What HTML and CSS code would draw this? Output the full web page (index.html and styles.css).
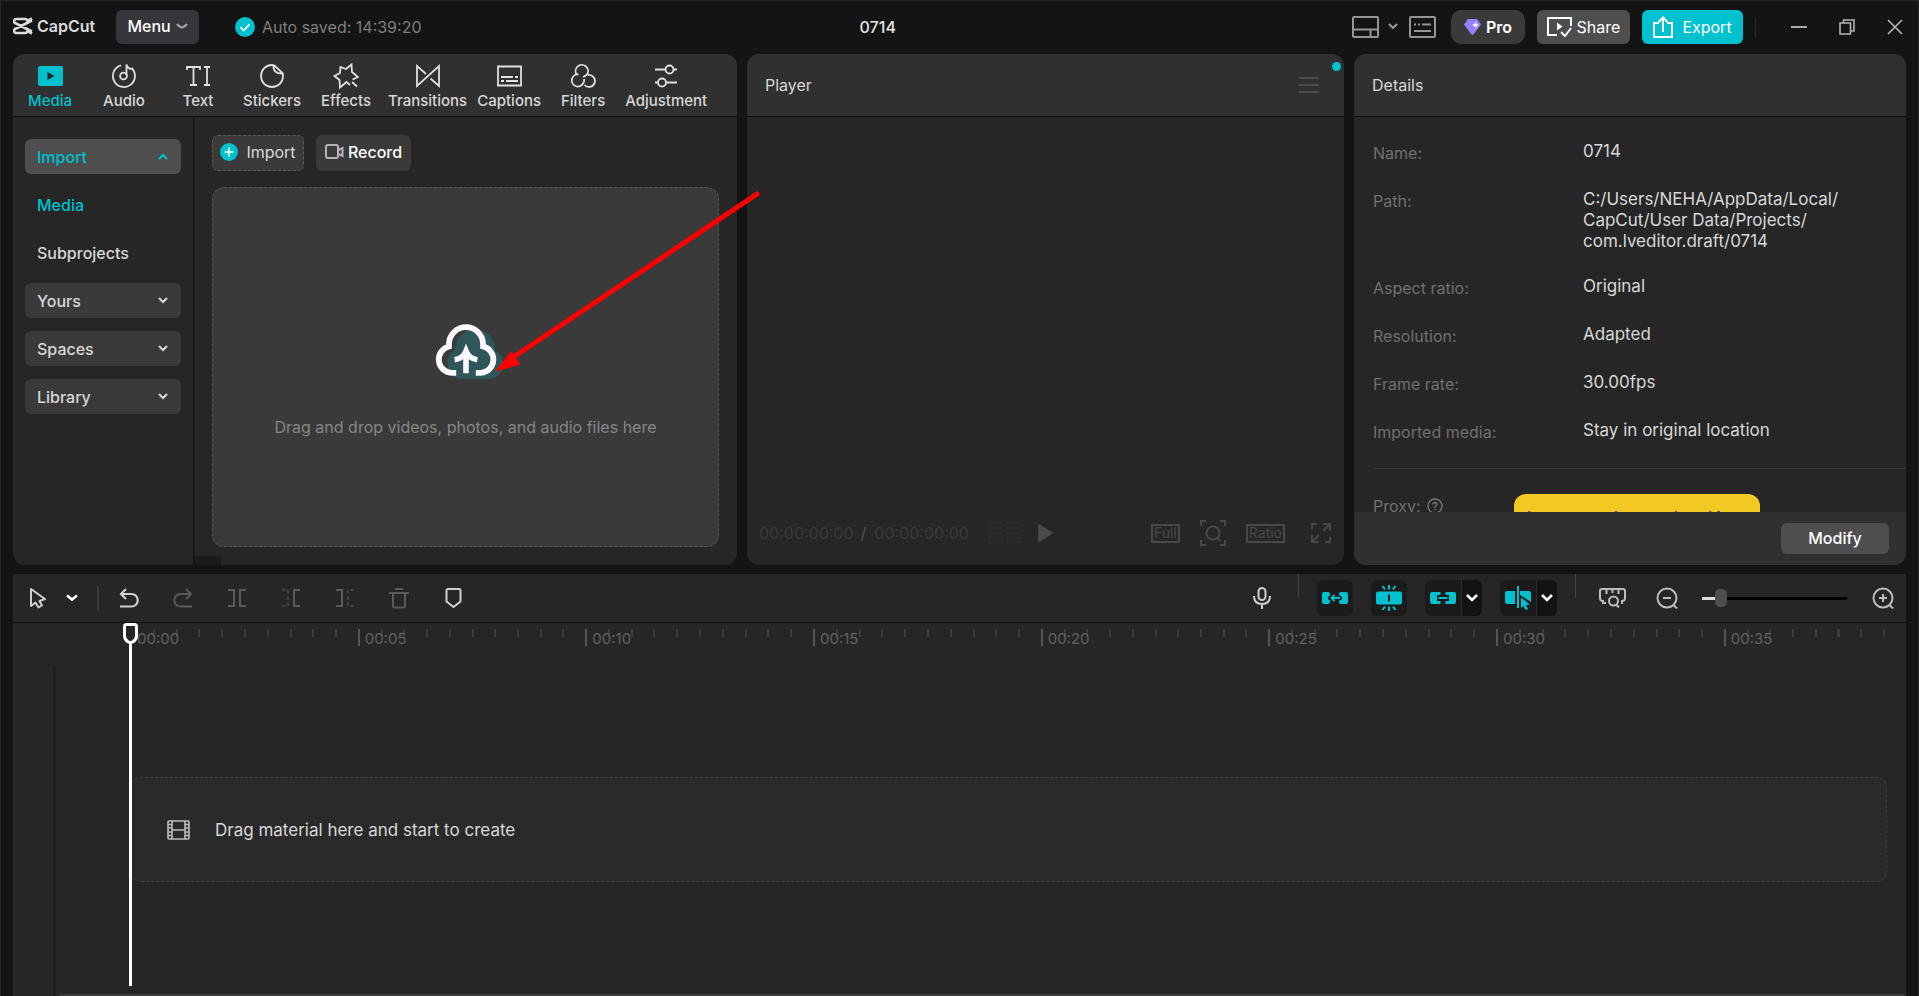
FILE: index.html
```html
<!DOCTYPE html>
<html lang="en">
<head>
    <meta charset="UTF-8">
    <meta name="viewport" content="width=device-width, initial-scale=1.0">
    <title>CapCut - 0714</title>
    <link rel="stylesheet" href="styles.css">
</head>
<body>
    <!-- Title bar -->
    <header class="titlebar">
        <div class="logo">
            <svg width="20" height="18" viewBox="0 0 20 18" fill="none" stroke="#dcdcdc" stroke-width="2.6"><path d="M1 6V4.5Q1 2 3.5 2H12Q14 2 14.5 4L19 1.5M1 12v1.5Q1 16 3.5 16H12Q14 16 14.5 14L19 16.5M1 5.5L19 14.5M1 12.500L19 3.500"/></svg>
            <span>CapCut</span>
        </div>
        <button class="menu-btn">Menu
            <svg width="12" height="8" viewBox="0 0 12 8" fill="none" stroke="#a0a0a4" stroke-width="2.4"><path d="M1 2Q4.500 5.500 6 5.500T11 2"/></svg>
        </button>
        <div class="saved">
            <svg width="20" height="20" viewBox="0 0 20 20"><circle cx="10" cy="10" r="10" fill="#00c1cd"/><path d="M5.500 10.200l3.200 3.200 5.800-6" fill="none" stroke="#fff" stroke-width="1.800"/></svg>
            <span>Auto saved: 14:39:20</span>
        </div>
        <h1 class="project">0714</h1>
        <div class="title-tools">
            <button class="icon-btn layout-btn" aria-label="Layout">
                <svg width="27" height="22" viewBox="0 0 27 22" fill="none" stroke="#959595" stroke-width="2"><rect x="1" y="1" width="25" height="20" rx="1"/><path d="M1 13.500h25M18.500 13.500V21"/></svg>
                <svg width="10" height="7" viewBox="0 0 10 7" fill="none" stroke="#959595" stroke-width="2.200"><path d="M1 1l4 4 4-4"/></svg>
            </button>
            <button class="icon-btn keys-btn" aria-label="Shortcuts">
                <svg width="27" height="22" viewBox="0 0 27 22" fill="none" stroke="#959595" stroke-width="2"><rect x="1" y="1" width="25" height="20" rx="1"/><path d="M5 8.500h2M9 8.500h2M13 8.500h9M5 15h17"/></svg>
            </button>
            <button class="pill pro">
                <svg width="17" height="16" viewBox="0 0 17 16"><path d="M4 0h9l4 5.500L9.500 15.500Q8.500 16.300 7.500 15.500L0 5.500z" fill="#9580ff"/><path d="M11.500 2.500l1 2.500 2.500 1-2.500 1-1 2.500-1-2.500-2.500-1 2.500-1z" fill="#fff"/></svg>
                Pro
            </button>
            <button class="pill share">
                <svg width="25" height="20" viewBox="0 0 25 20" fill="none" stroke="#fff" stroke-width="2"><path d="M24 9V1H1v17h9M14 15l4 4 6-8"/><path d="M10 5.500v8l5.500-4z" fill="#fff" stroke="none"/></svg>
                Share
            </button>
            <button class="pill export">
                <svg width="20" height="22" viewBox="0 0 20 22" fill="none" stroke="#fff" stroke-width="2"><path d="M6 7H1v14h18V7h-5M10 16V2M5.500 6L10 1.500 14.500 6"/></svg>
                Export
            </button>
            <span class="bar-sep"></span>
            <button class="icon-btn win-btn" aria-label="Minimize">
                <svg width="16" height="16" viewBox="0 0 16 16" stroke="#aaa" stroke-width="2"><path d="M0 8h16"/></svg>
            </button>
            <button class="icon-btn win-btn" aria-label="Restore">
                <svg width="16" height="16" viewBox="0 0 16 16" fill="none" stroke="#b4b4b4" stroke-width="1.600"><path d="M1 4h10.500v11H1zM4.500 4V1H15v11h-3.500"/></svg>
            </button>
            <button class="icon-btn win-btn" aria-label="Close">
                <svg width="16" height="16" viewBox="0 0 16 16" stroke="#b4b4b4" stroke-width="1.600"><path d="M1 1l14 14M15 1L1 15"/></svg>
            </button>
        </div>
    </header>

    <main class="panels">
        <!-- Media library -->
        <section class="panel media">
            <nav class="tabs">
                <button class="tab active"><svg width="26" height="26" viewBox="0 0 26 26"><rect x="1" y="3" width="25" height="20" rx="2" fill="#00c1cd"/><path d="M10.500 9v8l7-4z" fill="#262626"/></svg>Media</button>
                <button class="tab"><svg class="line" width="26" height="26" viewBox="0 0 26 26"><path d="M10 2.400A11 11 0 1 0 20.500 5M15.500 12V1.500Q16.500 5.500 20.500 6"/><circle cx="12.500" cy="13" r="3.400"/></svg>Audio</button>
                <button class="tab"><svg class="line" width="26" height="26" viewBox="0 0 26 26"><path d="M2 7V4h13v3M8.500 4v18M5 22h7M19 4h6M22 4v18M19 22h6"/></svg>Text</button>
                <button class="tab"><svg class="line" width="26" height="26" viewBox="0 0 26 26"><path d="M13 2A11 11 0 1 0 24 13Q24 11 23.500 10L16 3Q14.500 2 13 2zM14.500 2.500Q14 11 24 10.500"/></svg>Stickers</button>
                <button class="tab"><svg class="line" width="26" height="26" viewBox="0 0 26 26"><path d="M17 22L13.500 19 7 24.500 6.500 17 1.500 13 7 10 7.500 4 13 6 18.500 1.500 19 9 25 14 19.500 16.500M19 19l5 4.500"/></svg>Effects</button>
                <button class="tab"><svg class="line" width="26" height="26" viewBox="0 0 26 26"><path d="M11 11L2 3v20L24 3v20l-8.500-7.500"/></svg>Transitions</button>
                <button class="tab"><svg class="line" width="26" height="26" viewBox="0 0 26 26"><path d="M2 3.500h23v19H2zM5 14h12M19 14h3M5 18h3M10 18h12"/></svg>Captions</button>
                <button class="tab"><svg class="line" width="26" height="26" viewBox="0 0 26 26"><path d="M7 12A6.200 6.200 0 1 1 17 11.500Q15.500 13 13 14M8.500 11.500A6 6 0 1 0 13 20.500Q14.500 18.500 14 16M18 12A6 6 0 1 1 14.500 22"/></svg>Filters</button>
                <button class="tab"><svg class="line" width="26" height="26" viewBox="0 0 26 26"><path d="M2 6.500h10.500M20.500 6.500H24M2 19.500h3M13 19.500h11"/><circle cx="16.500" cy="6.500" r="4"/><circle cx="9" cy="19.500" r="4"/></svg>Adjustment</button>
            </nav>
            <div class="media-body">
                <aside class="sidebar">
                    <button class="side-item open">Import<svg width="10" height="7" viewBox="0 0 10 7"><path d="M1 6l4-4 4 4"/></svg></button>
                    <a class="side-link active" href="#media">Media</a>
                    <a class="side-link" href="#subprojects">Subprojects</a>
                    <button class="side-item">Yours<svg width="10" height="7" viewBox="0 0 10 7"><path d="M1 1l4 4 4-4"/></svg></button>
                    <button class="side-item">Spaces<svg width="10" height="7" viewBox="0 0 10 7"><path d="M1 1l4 4 4-4"/></svg></button>
                    <button class="side-item">Library<svg width="10" height="7" viewBox="0 0 10 7"><path d="M1 1l4 4 4-4"/></svg></button>
                </aside>
                <div class="library">
                    <div class="library-actions">
                        <button class="import-btn">
                            <svg width="18" height="18" viewBox="0 0 18 18"><circle cx="9" cy="9" r="9" fill="#00c1cd"/><path d="M9 4.500v9M4.500 9h9" stroke="#fff" stroke-width="1.600"/></svg>
                            Import
                        </button>
                        <button class="record-btn">
                            <svg width="19" height="16" viewBox="0 0 19 16" fill="none" stroke="#b4b4b4" stroke-width="2"><rect x="1" y="1" width="12" height="13" rx="2"/><path d="M13.500 6L17.500 4v8l-4-2"/></svg>
                            Record
                        </button>
                    </div>
                    <div class="dropzone">
                        <svg class="cloud" width="62" height="57" viewBox="1 0 60 55">
                            <path d="M25 54A15.500 15.500 0 0 1 20.500 25.500V24A19.300 19.300 0 0 1 59 24V26.500A14.500 14.500 0 0 1 55 54z" fill="#2f565b"/>
                            <path d="M21.500 48.200H17A13 13 0 0 1 14.500 22.600V20.500A16.500 16.500 0 0 1 47.500 20.500V22.600A13 13 0 0 1 45.500 48.200H40.500" fill="none" stroke="#fafaff" stroke-width="5.600"/>
                            <path d="M31 27v21.500M20 35.500Q28 34.500 31 27Q34 34.500 42 35.500" fill="none" stroke="#fafaff" stroke-width="5.400"/>
                        </svg>
                        <p>Drag and drop videos, photos, and audio files here</p>
                    </div>
                    <div class="scroll-corner"></div>
                </div>
            </div>
        </section>

        <!-- Player -->
        <section class="panel player">
            <div class="panel-head">
                <h2>Player</h2>
                <button class="icon-btn" aria-label="Player menu">
                    <svg width="20" height="18" viewBox="0 0 20 18" stroke="#4a4a4d" stroke-width="2"><path d="M0 2h20M0 9h20M0 16h20"/></svg>
                </button>
                <span class="dot"></span>
            </div>
            <div class="stage"></div>
            <div class="player-controls">
                <span class="time">00:00:00:00</span>
                <span class="slash">/</span>
                <span class="time">00:00:00:00</span>
                <svg class="meter" width="33" height="24" viewBox="0 0 33 24" stroke="#2b2b2b" stroke-width="3"><path d="M0 2h15M18 2h15M0 7h15M18 7h15M0 12h15M18 12h15M0 17h15M18 17h15M0 22h15M18 22h15"/></svg>
                <button class="icon-btn" aria-label="Play"><svg width="15" height="18" viewBox="0 0 15 18"><path d="M1 1v16l13-8z" fill="#4b4b4b" stroke="#4b4b4b" stroke-width="1.500" stroke-linejoin="round"/></svg></button>
                <div class="view-tools">
                    <button class="box-btn">Full</button>
                    <button class="icon-btn" aria-label="Zoom to fit"><svg width="26" height="26" viewBox="0 0 26 26" fill="none" stroke="#484848" stroke-width="2"><path d="M6 1H1v5M20 1h5v5M6 25H1v-5M20 25h5v-5M17 18l3.500 3"/><circle cx="13" cy="13" r="6.500"/></svg></button>
                    <button class="box-btn">Ratio</button>
                    <button class="icon-btn fullscreen" aria-label="Full screen"><svg width="20" height="20" viewBox="0 0 20 20" fill="none" stroke="#484848" stroke-width="2"><path d="M6 1H1v5M12 1h7v7M14 19h5v-5M8 19H1v-7M18.500 1.500L12 8M1.500 18.500L8 12"/></svg></button>
                </div>
            </div>
        </section>

        <!-- Project details -->
        <section class="panel details">
            <div class="panel-head"><h2>Details</h2></div>
            <div class="details-body">
                <dl class="fields">
                    <div class="field"><dt>Name:</dt><dd>0714</dd></div>
                    <div class="field"><dt>Path:</dt><dd>C:/Users/NEHA/AppData/Local/<wbr>CapCut/User Data/Projects/<wbr>com.lveditor.draft/0714</dd></div>
                    <div class="field"><dt>Aspect ratio:</dt><dd>Original</dd></div>
                    <div class="field"><dt>Resolution:</dt><dd>Adapted</dd></div>
                    <div class="field"><dt>Frame rate:</dt><dd>30.00fps</dd></div>
                    <div class="field"><dt>Imported media:</dt><dd>Stay in original location</dd></div>
                </dl>
                <div class="proxy">
                    <span>Proxy:</span>
                    <svg width="16" height="16" viewBox="0 0 16 16" fill="none" stroke="#7c7c7c" stroke-width="1.300"><circle cx="8" cy="8" r="7"/><path d="M6 6.500Q6 4.500 8 4.500T10 6.500Q10 7.500 8 8.500V10M8 11v1.500"/></svg>
                    <div class="tip">Layers can be reordered in</div>
                </div>
            </div>
            <div class="details-foot"><button class="modify">Modify</button></div>
        </section>
    </main>

    <!-- Timeline -->
    <section class="timeline">
        <div class="toolbar">
            <div class="edit-tools">
                <button class="icon-btn" aria-label="Select"><svg width="18" height="22" viewBox="0 0 18 22" fill="none" stroke="#cfcfcf" stroke-width="2" stroke-linejoin="round"><path d="M2 2v17l4.500-3.500 3 5 3.500-2-2.500-4.500L16 12z"/></svg></button>
                <button class="icon-btn chevron" aria-label="Select options"><svg width="12" height="8" viewBox="0 0 12 8" fill="none" stroke="#fff" stroke-width="2.600"><path d="M1 1.500l5 4 5-4"/></svg></button>
                <span class="tool-sep"></span>
                <button class="icon-btn tool" aria-label="Undo"><svg width="20" height="20" viewBox="0 0 20 20" fill="none" stroke="#cfcfcf" stroke-width="2.200"><path d="M7 1L2 6l5 5M2 6h10.500a6 6 0 0 1 0 12.500H1"/></svg></button>
                <button class="icon-btn tool" aria-label="Redo"><svg width="20" height="20" viewBox="0 0 20 20" fill="none" stroke="#5a5a5a" stroke-width="2"><path d="M13 1l5 5-5 5M18 6H7.500a6 6 0 0 0 0 12.500H19"/></svg></button>
                <button class="icon-btn tool" aria-label="Split"><svg width="18" height="20" viewBox="0 0 18 20" fill="none" stroke="#5a5a5a" stroke-width="2"><path d="M0 2h6v16H0M18 2h-6v16h6"/></svg></button>
                <button class="icon-btn tool" aria-label="Delete left"><svg width="18" height="20" viewBox="0 0 18 20" fill="none" stroke="#5a5a5a" stroke-width="2"><path d="M18 2h-6v16h6"/><path d="M0 2h6v16H0" stroke="#404040" stroke-dasharray="4 2"/></svg></button>
                <button class="icon-btn tool" aria-label="Delete right"><svg width="18" height="20" viewBox="0 0 18 20" fill="none" stroke="#5a5a5a" stroke-width="2"><path d="M0 2h6v16H0"/><path d="M18 2h-6v16h6" stroke="#404040" stroke-dasharray="4 2"/></svg></button>
                <button class="icon-btn tool" aria-label="Delete"><svg width="20" height="22" viewBox="0 0 20 22" fill="none" stroke="#5a5a5a" stroke-width="2"><path d="M6 2h8M0 6h20M4 6v13q0 1.500 1.500 1.500h9q1.500 0 1.500-1.500V6"/></svg></button>
                <button class="icon-btn tool" aria-label="Marker"><svg width="17" height="22" viewBox="0 0 17 22" fill="none" stroke="#cfcfcf" stroke-width="2" stroke-linejoin="round"><path d="M3 2h11q1.500 0 1.500 1.500v11L8.500 20 1.500 14.500v-11Q1.500 2 3 2z"/></svg></button>
            </div>
            <div class="view-group">
                <button class="icon-btn mic" aria-label="Record voice"><svg width="20" height="22" viewBox="0 0 20 22" fill="none" stroke="#cfcfcf" stroke-width="2"><rect x="6.500" y="1" width="7" height="12" rx="3.500"/><path d="M2 9q0 8 8 8t8-8M10 17v5"/></svg></button>
                <span class="half-sep"></span>
                <button class="toggle" aria-label="Main track magnet"><svg width="28" height="18" viewBox="0 0 28 18"><path d="M3 3h4q2 0 2 2v1.500Q7 7 7 9t2 2.500V13q0 2-2 2H3q-2 0-2-2V5q0-2 2-2zM20 3h5q2 0 2 2v8q0 2-2 2h-5q-2 0-2-2v-1.500q3-.5 3-2.500t-3-2.500V5q0-2 2-2z" fill="#00c1cd"/><path d="M13.500 6l-3 3 3 3M10.500 9H19" fill="none" stroke="#00c1cd" stroke-width="1.800"/></svg></button>
                <button class="toggle" aria-label="Auto snapping"><svg width="28" height="26" viewBox="0 0 28 26"><rect x="1" y="6.500" width="26" height="13" rx="2" fill="#00c1cd"/><path d="M14 9.500v7" stroke="#1b1b1b" stroke-width="2"/><path d="M14 0v4.500M7.500 1l2.500 3.500M20.500 1L18 4.500M14 21.500V26M7.500 25l2.500-3.500M20.500 25L18 21.500" stroke="#00c1cd" stroke-width="2"/></svg></button>
                <div class="toggle-pair">
                    <button class="toggle" aria-label="Linkage"><svg width="28" height="18" viewBox="0 0 28 18"><path d="M3 3h8.500v3H8v6h3.500v3H3q-2 0-2-2V5q0-2 2-2zM25 3h-8.500v3H20v6h-3.500v3H25q2 0 2-2V5q0-2-2-2z" fill="#00c1cd"/><path d="M9.500 9h9" stroke="#00c1cd" stroke-width="2"/></svg></button>
                    <button class="drop" aria-label="Linkage options"><svg width="12" height="8" viewBox="0 0 12 8" fill="none" stroke="#fff" stroke-width="2.600"><path d="M1 1l5 5 5-5"/></svg></button>
                </div>
                <div class="toggle-pair">
                    <button class="toggle" aria-label="Preview axis"><svg width="28" height="24" viewBox="0 0 28 24"><path d="M3 5h8v13H3q-2 0-2-2V7q0-2 2-2zM16 5h9q2 0 2 2v9l-11-7z" fill="#00c1cd"/><path d="M14 0v22" stroke="#00c1cd" stroke-width="2"/><path d="M17 11.500l9 7-4 .5 2 4-2.500 1-2-4-2.500 2z" fill="#00c1cd"/></svg></button>
                    <button class="drop" aria-label="Preview options"><svg width="12" height="8" viewBox="0 0 12 8" fill="none" stroke="#fff" stroke-width="2.600"><path d="M1 1l5 5 5-5"/></svg></button>
                </div>
                <span class="half-sep"></span>
                <button class="icon-btn fit" aria-label="Fit timeline"><svg width="27" height="20" viewBox="0 0 27 20" fill="none" stroke="#bdbdbd" stroke-width="2"><path d="M7 15H4v-2q-3 0-3-3V3q0-2 2-2h21q2 0 2 2v7q0 3-3 3v2h-1M7.500 1v5M13.500 1v4M19.500 1v5M17 16.500l3 3"/><circle cx="14.500" cy="13" r="4.500"/></svg></button>
                <button class="icon-btn zoom-out" aria-label="Zoom out"><svg width="22" height="22" viewBox="0 0 22 22" fill="none" stroke="#bdbdbd" stroke-width="2"><circle cx="11" cy="11" r="9.500"/><path d="M7 11h8M17.500 18l3.500 3.500"/></svg></button>
                <input class="zoom" type="range" min="0" max="100" value="10" aria-label="Timeline zoom">
                <button class="icon-btn zoom-in" aria-label="Zoom in"><svg width="22" height="22" viewBox="0 0 22 22" fill="none" stroke="#bdbdbd" stroke-width="2"><circle cx="11" cy="11" r="9.500"/><path d="M7 11h8M11 7v8M17.500 18l3.500 3.500"/></svg></button>
            </div>
        </div>
        <div class="tracks">
            <div class="track-heads"></div>
            <div class="track-area">
                <div class="ruler">
                    <span class="mark">00:00</span>
                    <span class="mark">00:05</span>
                    <span class="mark">00:10</span>
                    <span class="mark">00:15</span>
                    <span class="mark">00:20</span>
                    <span class="mark">00:25</span>
                    <span class="mark">00:30</span>
                    <span class="mark">00:35</span>
                </div>
                <div class="main-track">
                    <svg width="23" height="20" viewBox="0 0 23 20" fill="none" stroke="#bdbdbd" stroke-width="1.600"><rect x="1" y="1" width="21" height="18" rx="1"/><path d="M5 1v18M18 1v18M5 10h13M1 4.500h4M1 8h4M1 12h4M1 15.500h4M18 4.500h4M18 8h4M18 12h4M18 15.500h4"/></svg>
                    <span>Drag material here and start to create</span>
                </div>
                <div class="playhead">
                    <svg width="15" height="21" viewBox="0 0 15 21"><path d="M3.500 1.500h8q2 0 2 2V13q0 3-3 5.500-3 2-6 0-3-2.500-3-5.500V3.500q0-2 2-2z" fill="#262626" stroke="#fff" stroke-width="3"/></svg>
                </div>
            </div>
            <div class="h-scroll"></div>
        </div>
    </section>

    <!-- Pointer to the drop area -->
    <svg class="pointer" width="270" height="190" viewBox="0 0 270 190"><path d="M265 9L20 173" stroke="#f00" stroke-width="5" stroke-linecap="round"/><path d="M3 186.500L19.500 166l9 13.500z" fill="#f00"/></svg>
</body>
</html>
```
FILE: styles.css
```css
/* General */
* {
    box-sizing: border-box;
}

body {
    margin: 0;
    height: 100vh;
    display: grid;
    grid-template-rows: 53px minmax(0, 511fr) minmax(0, 431fr);
    position: relative;
    overflow: hidden;
    padding: 0 12px;
    border: solid #262626;
    border-width: 1px 1px 0;
    background-color: #141414;
    color: #d8d8d8;
    font-family: Inter, "Liberation Sans", sans-serif;
    font-size: 16px;
}

button {
    font: inherit;
    color: inherit;
    border: none;
    cursor: pointer;
}

h1, h2, p, dl, dd {
    margin: 0;
    font-weight: 400;
}

svg {
    display: block;
    flex-shrink: 0;
}

.icon-btn {
    display: flex;
    align-items: center;
    padding: 0;
    background: none;
}

/* Title bar */
.titlebar {
    display: flex;
    align-items: center;
    padding-bottom: 2px;
}

.logo {
    display: flex;
    align-items: center;
    gap: 4px;
    width: 103px;
    padding-bottom: 2px;
    color: #dcdcdc;
    font-size: 16px;
    font-weight: 600;
}

.menu-btn {
    display: flex;
    align-items: center;
    justify-content: center;
    gap: 5px;
    width: 83px;
    height: 34px;
    padding: 0 0 2px;
    border-radius: 6px;
    background-color: #36353a;
    color: #fff;
    font-weight: 500;
}

.saved {
    display: flex;
    align-items: center;
    gap: 7px;
    margin-left: 36px;
    color: #7f7f7f;
}

.project {
    flex: 1;
    padding-right: 18px;
    text-align: center;
    font-size: 16px;
    font-weight: 500;
    color: #e6e6e6;
}

.title-tools {
    display: flex;
    align-items: center;
}

.layout-btn {
    gap: 9px;
    margin-right: 11px;
}

.keys-btn {
    margin-right: 15px;
}

.pill {
    display: flex;
    align-items: center;
    justify-content: center;
    gap: 5px;
    height: 34px;
    margin-right: 12px;
    padding: 0;
    border-radius: 6px;
    color: #fff;
}

.pro {
    width: 74px;
    border-radius: 10px;
    background-color: #3a3a3a;
    font-weight: 600;
}

.share {
    width: 93px;
    background-color: #4e4e4e;
}

.export {
    width: 101px;
    gap: 9px;
    background-color: #00c1cd;
}

.bar-sep {
    width: 1px;
    height: 20px;
    margin-right: 35px;
    background-color: #2a2a2a;
}

.win-btn {
    margin-right: 32px;
}

.win-btn:last-child {
    margin-right: 3px;
}

/* Panels */
.panels {
    display: grid;
    grid-template-columns: minmax(0, 724fr) minmax(0, 597fr) minmax(0, 552fr);
    gap: 10px;
}

.panel {
    display: flex;
    flex-direction: column;
    min-height: 0;
    overflow: hidden;
    border-radius: 12px;
    background-color: #262626;
}

.panel-head,
.tabs {
    display: flex;
    flex-shrink: 0;
    height: 63px;
    border-bottom: 1px solid #101010;
    background-color: #303030;
}

.panel-head {
    position: relative;
    align-items: center;
    justify-content: space-between;
    padding: 0 25px 0 18px;
}

.panel-head h2 {
    font-size: 16px;
}

/* Media */
.tab {
    display: flex;
    flex-direction: column;
    align-items: center;
    gap: 2px;
    min-width: 74px;
    padding: 9px 5px 0;
    background: none;
    font-size: 15px;
    font-weight: 500;
    line-height: 20px;
}

.tab.active {
    color: #00c1cd;
}

.line {
    fill: none;
    stroke: #e0e0e0;
    stroke-width: 1.8;
}

.media-body {
    display: flex;
    flex: 1;
    min-height: 0;
}

.sidebar {
    display: flex;
    flex-direction: column;
    gap: 13px;
    width: 181px;
    padding: 22px 12px;
    border-right: 1px solid #0c0c0c;
}

.side-item,
.side-link {
    display: flex;
    align-items: center;
    justify-content: space-between;
    height: 35px;
    padding: 0 13px 0 12px;
    font-weight: 500;
    text-decoration: none;
    color: #d8d8d8;
}

.side-item {
    border-radius: 6px;
    background-color: #3a3a3a;
}

.side-item svg {
    fill: none;
    stroke: currentColor;
    stroke-width: 2;
}

.side-item.open {
    background-color: #4e4e4e;
    color: #00c1cd;
}

.side-link.active {
    color: #00c1cd;
}

.library {
    display: flex;
    flex: 1;
    flex-direction: column;
    position: relative;
    padding: 18px;
}

.library-actions {
    display: flex;
    gap: 12px;
    margin-bottom: 16px;
}

.import-btn,
.record-btn {
    display: flex;
    align-items: center;
    justify-content: center;
    height: 36px;
    padding: 0 0 2px;
    border-radius: 6px;
    background-color: #3a3a3a;
}

.import-btn {
    gap: 8px;
    width: 92px;
    border: 1px dashed #5a5a5a;
}

.record-btn {
    gap: 4px;
    width: 95px;
    color: #fff;
    font-weight: 500;
}

.dropzone {
    display: flex;
    flex: 1;
    flex-direction: column;
    align-items: center;
    justify-content: center;
    gap: 37px;
    padding-top: 25px;
    border: 1px dashed #555;
    border-radius: 12px;
    background-color: #3a3a3a;
    color: #868686;
}

.cloud {
    overflow: visible;
}

.scroll-corner {
    position: absolute;
    left: 0;
    bottom: 0;
    width: 27px;
    height: 9px;
    background-color: #1b1b1b;
}

/* Player */
.dot {
    position: absolute;
    top: 8px;
    right: 3px;
    width: 9px;
    height: 9px;
    border-radius: 50%;
    background-color: #00c1cd;
}

.stage {
    flex: 1;
}

.player-controls {
    display: flex;
    align-items: center;
    height: 64px;
    padding: 0 13px 0 12px;
    color: #3a3a3a;
}

.slash {
    margin: 0 8px 0 7px;
    color: #555;
}

.meter {
    margin: 0 17px 0 19px;
}

.view-tools {
    display: flex;
    align-items: center;
    gap: 20px;
    margin-left: auto;
}

.box-btn {
    height: 19px;
    padding: 0 1px;
    border: 2px solid #484848;
    background: none;
    color: #484848;
    font-size: 14px;
    line-height: 14px;
}

.fullscreen {
    margin-left: 6px;
}

/* Details */
.details-body {
    flex: 1;
    min-height: 0;
    overflow: hidden;
    padding: 24px 0 0 19px;
}

.fields {
    display: flex;
    flex-direction: column;
    gap: 24px;
    padding-bottom: 24px;
    border-bottom: 1px solid #383838;
}

.field {
    display: grid;
    grid-template-columns: 210px 268px;
    min-height: 24px;
    font-size: 17px;
    line-height: 21px;
}

.field dt {
    padding-top: 2px;
    color: #707070;
    font-size: 16px;
}

.proxy {
    display: flex;
    align-items: center;
    gap: 6px;
    position: relative;
    padding-top: 26px;
    color: #707070;
    line-height: 22px;
}

.tip {
    position: absolute;
    top: 25px;
    left: 141px;
    width: 246px;
    padding: 12px 13px;
    border-radius: 12px;
    background-color: #f2c922;
    color: #1b1b1b;
}

.details-foot {
    display: flex;
    align-items: center;
    justify-content: flex-end;
    height: 53px;
    padding: 0 17px;
    background-color: #303030;
}

.modify {
    width: 108px;
    height: 31px;
    padding: 0 0 2px;
    border-radius: 6px;
    background-color: #4e4e4e;
    color: #fff;
    font-weight: 500;
}

/* Timeline */
.timeline {
    display: flex;
    flex-direction: column;
    min-height: 0;
    margin-top: 9px;
    background-color: #262626;
}

.toolbar {
    display: flex;
    justify-content: space-between;
    flex-shrink: 0;
    height: 49px;
    border-bottom: 1px solid #101010;
}

.edit-tools,
.view-group {
    display: flex;
    align-items: center;
}

.edit-tools {
    padding-left: 16px;
}

.chevron {
    margin-left: 19px;
}

.tool-sep {
    width: 2px;
    height: 24px;
    margin: 0 3px 0 19px;
    background-color: #3c3c3c;
}

.tool {
    justify-content: center;
    width: 54px;
}

.mic {
    margin-right: 26px;
}

.half-sep {
    align-self: flex-start;
    width: 1px;
    height: 24px;
    background-color: #444;
}

.toggle {
    display: flex;
    align-items: center;
    justify-content: center;
    width: 36px;
    height: 36px;
    margin-left: 18px;
    padding: 0;
    border-radius: 6px;
    background-color: #1b1b1b;
}

.toggle-pair {
    display: flex;
}

.toggle-pair .toggle {
    border-radius: 6px 0 0 6px;
}

.drop {
    display: flex;
    align-items: center;
    justify-content: center;
    width: 21px;
    height: 36px;
    padding: 0;
    border-left: 1px solid #2c2c2c;
    border-radius: 0 6px 6px 0;
    background-color: #131313;
}

.toggle-pair + .half-sep {
    margin-left: 18px;
}

.fit {
    margin: 0 30px 0 23px;
}

.zoom {
    appearance: none;
    width: 145px;
    height: 18px;
    margin: 0 25px 0 24px;
    background: linear-gradient(to right, #ddd 10%, #000 10%) center / 100% 3px no-repeat;
}

.zoom::-webkit-slider-thumb {
    appearance: none;
    width: 12px;
    height: 18px;
    border-radius: 5px;
    background-color: #4e4e4e;
}

.zoom-in {
    margin-right: 12px;
}

.tracks {
    display: flex;
    flex: 1;
    position: relative;
    min-height: 0;
}

.track-heads {
    width: 42px;
    margin-top: 42px;
    border-right: 1px solid #141414;
}

.track-area {
    display: flex;
    flex: 1;
    flex-direction: column;
    position: relative;
    min-width: 0;
    margin-left: 75px;
}

.ruler {
    display: flex;
    overflow: hidden;
    padding-top: 6px;
}

/* One mark is five seconds, with ten small ticks */
.mark {
    flex: 0 0 12.82%;
    height: 20px;
    padding-left: 5px;
    border-left: 2px solid #555;
    border-image: linear-gradient(#555 16px, transparent 16px) 1;
    border-width: 0 0 0 2px;
    background: repeating-linear-gradient(to right, #3c3c3c 0 2px, transparent 2px 10%) top left / 100% 8px no-repeat border-box;
    color: #626262;
    font-size: 15px;
    line-height: 20px;
}

.main-track {
    display: flex;
    align-items: center;
    gap: 25px;
    height: 105px;
    margin: 128px 19px 0 0;
    padding-left: 36px;
    border: 1px dashed #404040;
    border-radius: 10px;
    background-color: #2a2a2a;
    font-size: 17px;
}

.playhead {
    display: flex;
    justify-content: center;
    position: absolute;
    top: 0;
    bottom: 10px;
    left: -7px;
    width: 15px;
    background: linear-gradient(#fff, #fff) center / 3px 100% no-repeat;
}

.h-scroll {
    position: absolute;
    right: 0;
    bottom: 0;
    left: 46px;
    height: 2px;
    border-radius: 2px 2px 0 0;
    background-color: #3c3c3c;
}

/* Arrow drawn over the panels */
.pointer {
    position: absolute;
    top: 184px;
    left: 491px;
    fill: none;
    pointer-events: none;
}
```
